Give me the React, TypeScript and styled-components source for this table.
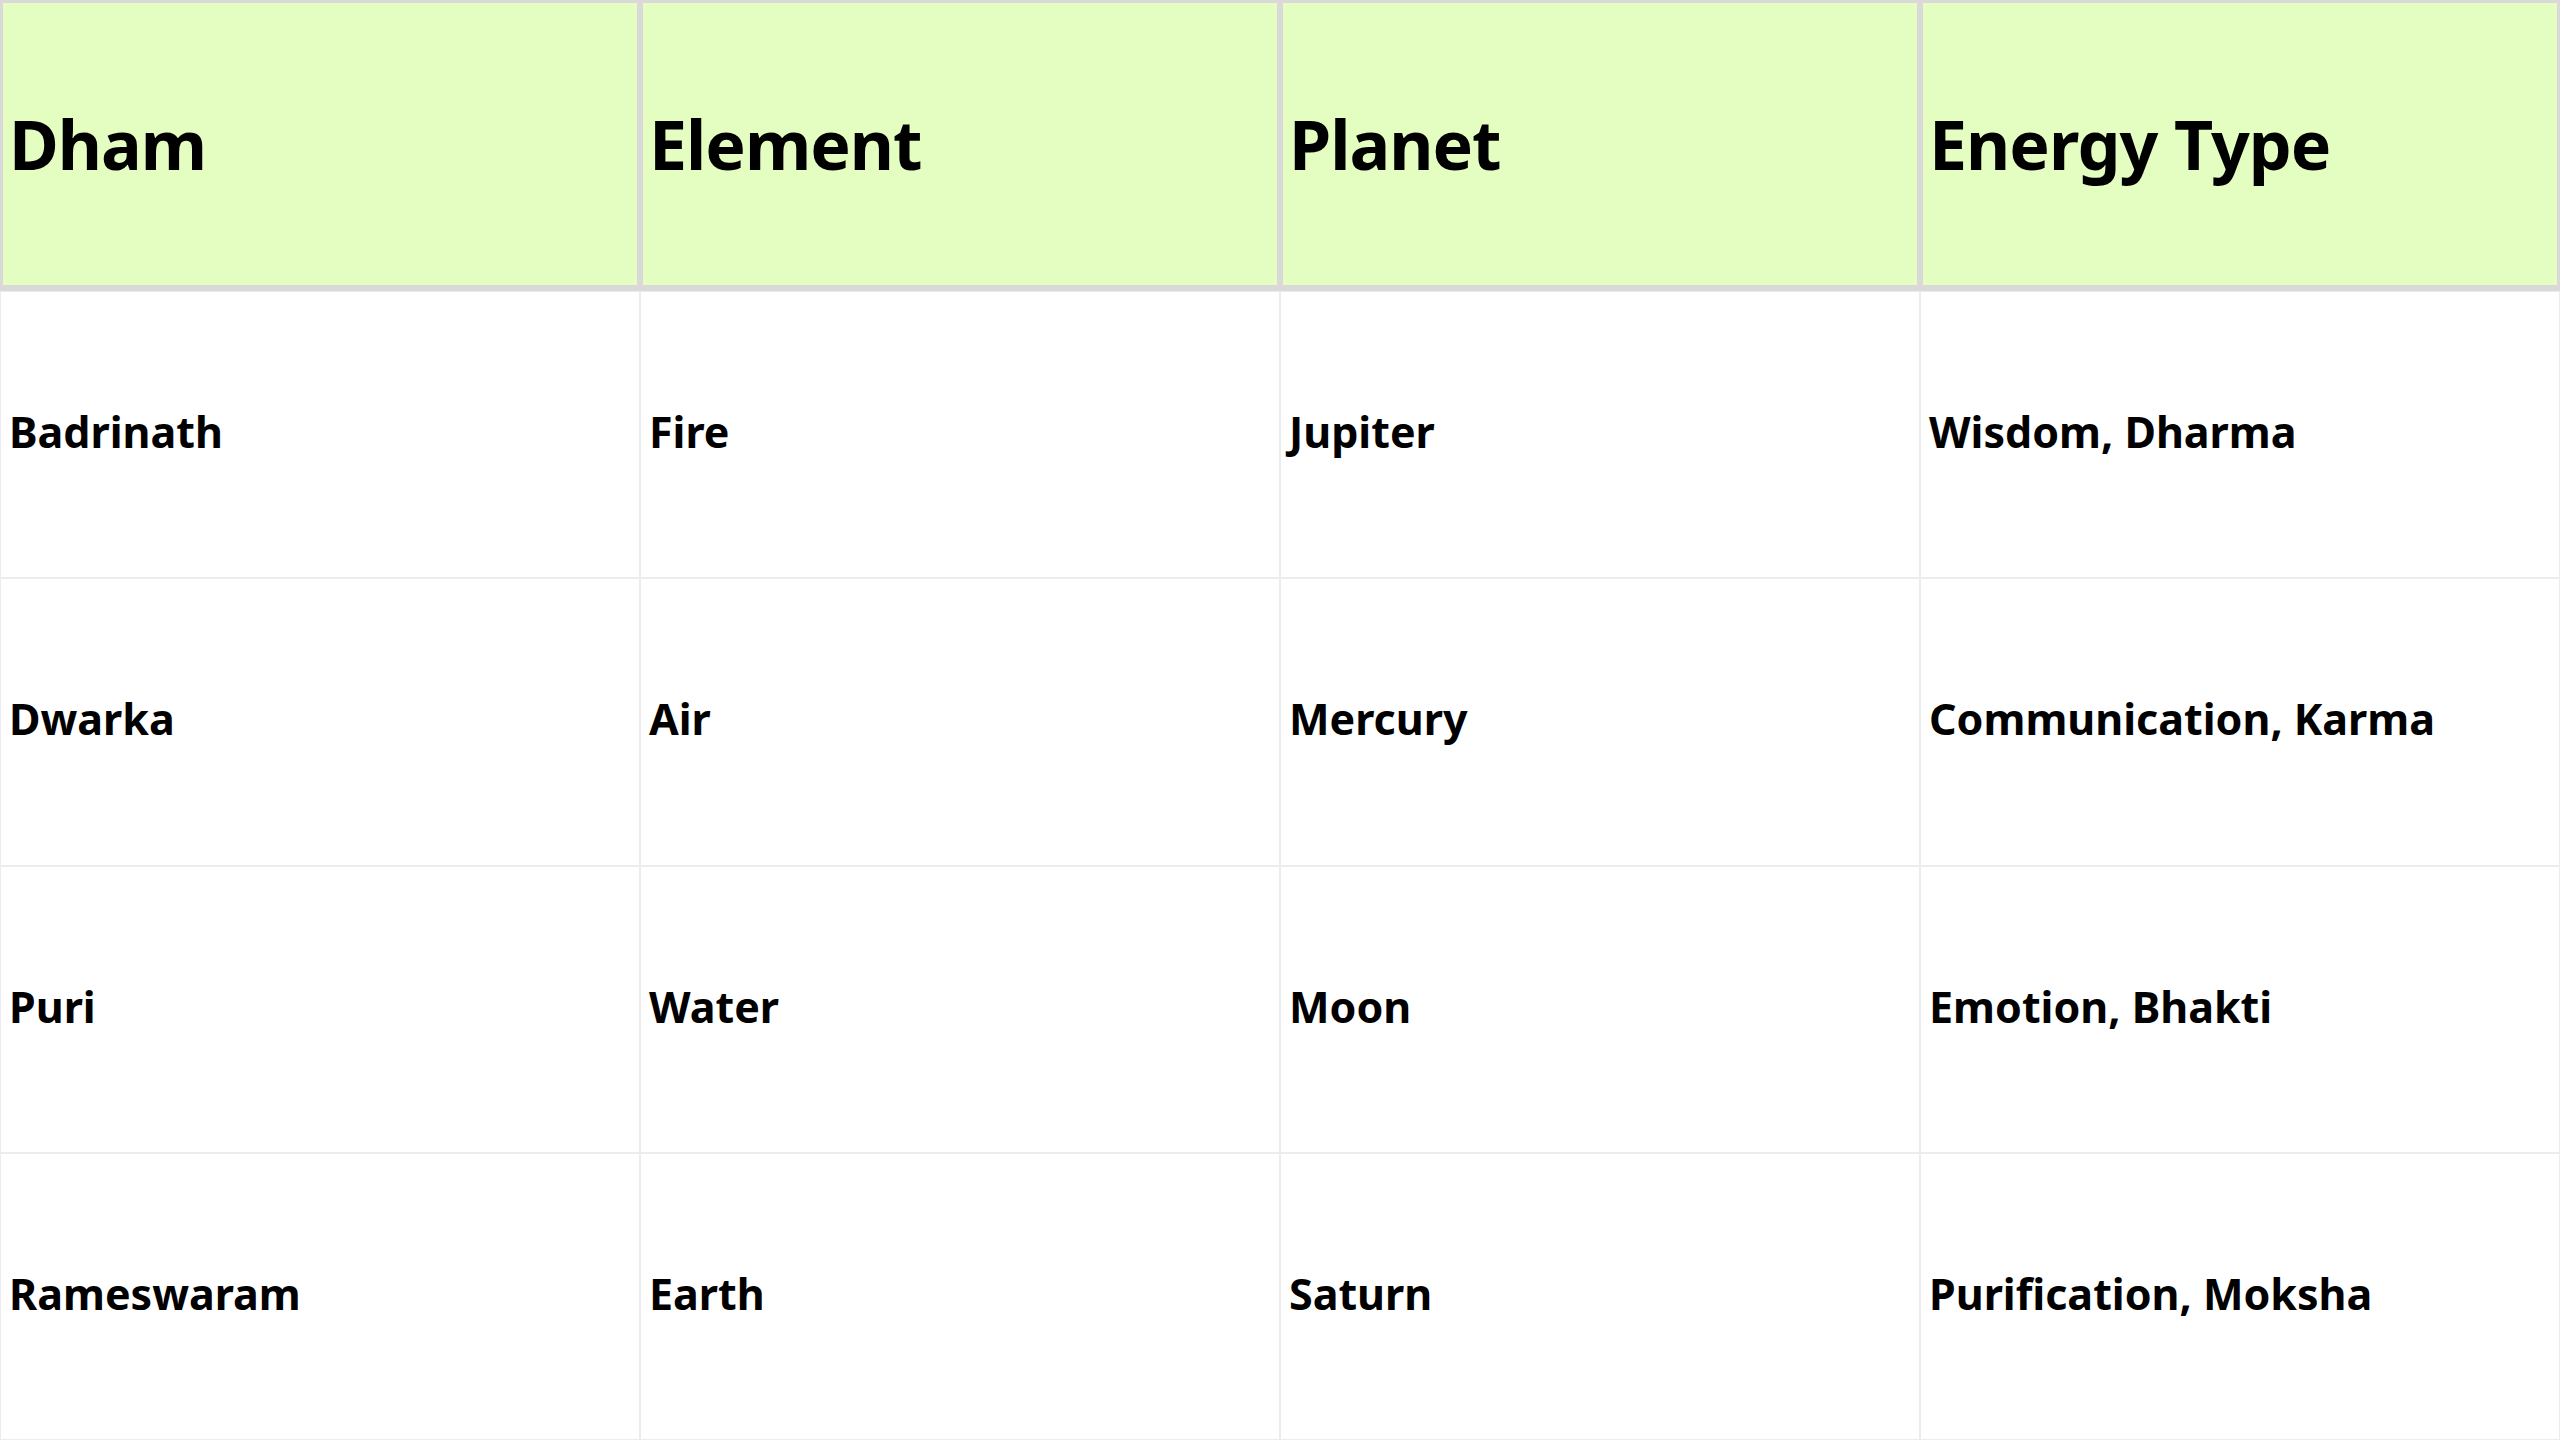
import React from "react";
import styled, { createGlobalStyle } from "styled-components";

const GlobalStyle = createGlobalStyle`
    html, body {
        margin: 0;
        padding: 0;
        background: #ffffff;
    }
`;

const Table = styled.div`
    display: grid;
    grid-template-columns: repeat(4, 640px);
    grid-template-rows: 291px repeat(4, 287.25px);
    width: 2560px;
    height: 1440px;
    font-family: "Noto Sans", "Open Sans", sans-serif;
    color: #000000;
`;

const HeadCell = styled.div`
    display: flex;
    align-items: center;
    box-sizing: border-box;
    padding: 0 6px 2px;
    background-color: #e3fec0;
    border: 3px solid #d9d9d9;
    border-bottom-width: 6px;
    font-size: 68px;
    font-weight: 700;
    letter-spacing: -1px;
`;

const Cell = styled.div`
    display: flex;
    align-items: center;
    box-sizing: border-box;
    padding: 0 8px 6px;
    border: 1px solid #ececec;
    font-size: 43px;
    font-weight: 700;
`;

const columns = ["Dham", "Element", "Planet", "Energy Type"];

const rows = [
    ["Badrinath", "Fire", "Jupiter", "Wisdom, Dharma"],
    ["Dwarka", "Air", "Mercury", "Communication, Karma"],
    ["Puri", "Water", "Moon", "Emotion, Bhakti"],
    ["Rameswaram", "Earth", "Saturn", "Purification, Moksha"],
];

export default function App() {
    return (
        <>
            <GlobalStyle />
            <Table>
                {columns.map(col => (
                    <HeadCell key={col}>{col}</HeadCell>
                ))}
                {rows.map((row, r) =>
                    row.map((value, c) => <Cell key={`${r}-${c}`}>{value}</Cell>)
                )}
            </Table>
        </>
    );
}
